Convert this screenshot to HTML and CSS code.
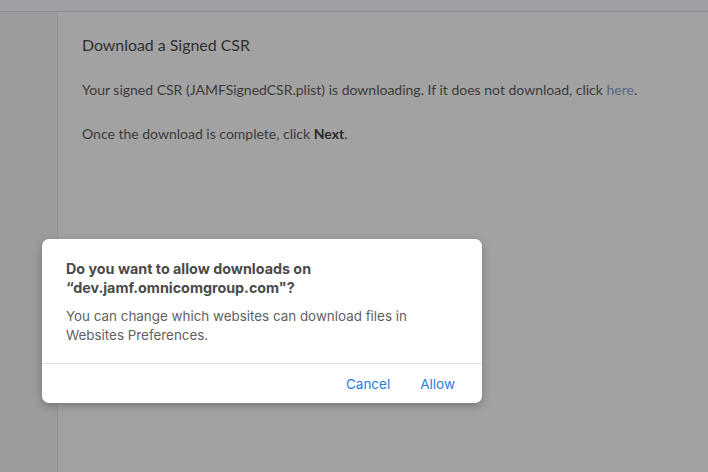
FILE: index.html
```html
<!DOCTYPE html>
<html>
<head>
<meta charset="utf-8">
<link rel="stylesheet" href="styles.css">
</head>
<body>
<div class="topbar"></div>
<div class="layout">
  <aside class="sidebar"></aside>
  <main class="main">
    <h1 class="title">Download a Signed CSR</h1>
    <p class="text">Your signed CSR (JAMFSignedCSR.plist) is downloading. If it does not download, click <a class="link">here</a>.</p>
    <p class="text">Once the download is complete, click <b>Next</b>.</p>
  </main>
</div>
<div class="dialog">
  <div class="dialog-body">
    <div class="dialog-title">Do you want to allow downloads on<br>“dev.jamf.omnicomgroup.com"?</div>
    <div class="dialog-msg">You can change which websites can download files in<br>Websites Preferences.</div>
  </div>
  <div class="dialog-actions">
    <span class="btn">Cancel</span>
    <span class="btn">Allow</span>
  </div>
</div>
</body>
</html>
```
FILE: styles.css
```css
html, body {
  margin: 0;
  padding: 0;
  width: 708px;
  height: 472px;
  overflow: hidden;
  background: #a2a2a2;
}
body {
  position: relative;
  font-family: "Lato", "Open Sans", sans-serif;
}
.topbar {
  height: 11px;
  background: #9ea0a4;
  border-bottom: 1px solid #8b8d94;
}
.layout {
  display: flex;
  height: 460px;
}
.sidebar {
  width: 57px;
  background: #9c9c9d;
  border-right: 1px solid #939393;
}
.main {
  flex: 1;
  padding: 23px 24px 0 24px;
  color: #3b3b3b;
}
.title {
  margin: 0 0 25px 0;
  font-size: 15.9px;
  font-weight: 400;
  line-height: 20px;
  color: #2f2f2f;
}
.text {
  margin: 0 0 25px 0;
  font-size: 14px;
  line-height: 19px;
}
.text b { font-weight: 700; color: #2a2a2a; }
.link { color: #5b6685; }
.dialog {
  position: absolute;
  left: 42px;
  top: 239px;
  width: 440px;
  height: 164px;
  background: #fff;
  border-radius: 7px;
  box-shadow: 0 3px 10px rgba(0,0,0,0.25);
  font-family: "Inter", "Liberation Sans", sans-serif;
  display: flex;
  flex-direction: column;
}
.dialog-body {
  padding: 20px 24px 0 24px;
  height: 125px;
  box-sizing: border-box;
  border-bottom: 1px solid #dcdcdc;
}
.dialog-title {
  font-size: 14.3px;
  font-weight: 700;
  line-height: 19px;
  color: #4a4a4a;
  margin-bottom: 10px;
}
.dialog-msg {
  font-size: 13.4px;
  line-height: 19px;
  color: #5f5f5f;
}
.dialog-actions {
  flex: 1;
  display: flex;
  justify-content: flex-end;
  align-items: center;
  gap: 30px;
  padding: 0 27px 0 0;
}
.btn {
  font-size: 13.5px;
  color: #2b7be0;
}
```
